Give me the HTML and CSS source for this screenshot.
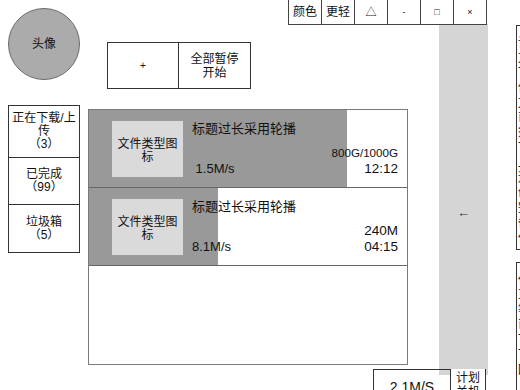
FILE: index.html
```html
<!DOCTYPE html>
<html lang="zh">
<head>
<meta charset="utf-8">
<title>下载管理</title>
<link rel="stylesheet" href="styles.css">
</head>
<body>
<div class="app">
  <div class="avatar">头像</div>
  <div class="actions">
    <div class="act plus">+</div>
    <div class="act">全部暂停<br>开始</div>
  </div>
  <div class="panel"><span class="arrow">←</span></div>
  <div class="toolbar">
    <div class="tb">颜色</div>
    <div class="tb">更轻</div>
    <div class="tb sym">△</div>
    <div class="tb tiny">-</div>
    <div class="tb tiny">□</div>
    <div class="tb tiny">×</div>
  </div>
  <nav class="nav">
    <div class="nav-item n1">正在下载/上传<br>（3）</div>
    <div class="nav-item n2">已完成<br>（99）</div>
    <div class="nav-item n3">垃圾箱<br>（5）</div>
  </nav>
  <section class="list">
    <div class="item" style="--p:81%">
      <div class="icon">文件类型图标</div>
      <div class="info">
        <div class="title">标题过长采用轮播</div>
        <div class="meta">
          <span class="speed">&nbsp;1.5M/s</span>
          <div class="stats"><div class="size">800G/1000G</div><div class="time">12:12</div></div>
        </div>
      </div>
    </div>
    <div class="item" style="--p:40.5%">
      <div class="icon">文件类型图标</div>
      <div class="info">
        <div class="title">标题过长采用轮播</div>
        <div class="meta">
          <span class="speed">8.1M/s</span>
          <div class="stats"><div class="size big">240M</div><div class="time">04:15</div></div>
        </div>
      </div>
    </div>
  </section>
  <div class="status">
    <div class="rate">2.1M/S</div>
    <div class="plan">计划<br>关机</div>
  </div>
  <aside class="side">
    <div class="sbox s1">详细信息<br>文件名称<br>下载地址<br>保存路径<br>文件大小<br>已经下载<br>剩余时间<br>下载速度<br>上传速度<br>连接数量<br>创建时间<br>完成时间<br>备注说明<br>任务状态</div>
    <div class="sbox s2">任务列表<br>正在下载<br>等待下载<br>已经暂停<br>下载完成<br>下载失败<br>回收站</div>
  </aside>
</div>
</body>
</html>
```

FILE: styles.css
```css
* { box-sizing: border-box; }
html, body { margin: 0; padding: 0; background: #fff; }
body {
  font-family: "Liberation Sans", "Noto Sans CJK SC", sans-serif;
  font-size: 12px;
  color: #111;
}
.app {
  display: grid;
  grid-template-columns: 88px 320px 31px 49px 28px 1fr;
  grid-template-rows: 105px 264px 21px;
  width: 520px;
  height: 390px;
  overflow: hidden;
}
.avatar {
  grid-area: 1 / 1;
  align-self: start;
  justify-self: start;
  margin: 8px 0 0 8px;
  width: 72px;
  height: 72px;
  border-radius: 50%;
  background: #ababab;
  border: 1px solid #6a6a6a;
  display: flex;
  align-items: center;
  justify-content: center;
  line-height: 14px;
}
.actions {
  grid-area: 1 / 2;
  align-self: start;
  justify-self: start;
  margin: 42px 0 0 19px;
  display: flex;
  border: 1px solid #333;
  height: 47px;
}
.act {
  width: 71px;
  display: flex;
  align-items: center;
  justify-content: center;
  text-align: center;
  line-height: 14px;
}
.act.plus { border-right: 1px solid #333; font-size: 10px; }
.panel {
  grid-column: 4;
  grid-row: 1 / 4;
  margin: 24px 0 15px 0;
  background: #d5d5d5;
  display: flex;
  align-items: center;
  justify-content: center;
  padding-top: 25px;
}
.arrow { font-size: 13px; color: #333; }
.toolbar {
  grid-column: 2 / 5;
  grid-row: 1;
  align-self: start;
  justify-self: end;
  margin-right: 1px;
  display: flex;
  border-left: 1px solid #444;
  border-bottom: 1px solid #444;
  background: #fff;
  position: relative;
  z-index: 1;
}
.tb {
  width: 33px;
  height: 24px;
  border-right: 1px solid #444;
  display: flex;
  align-items: center;
  justify-content: center;
  font-size: 12px;
  line-height: 14px;
}
.tb.sym { font-size: 11px; }
.tb.tiny { font-size: 9px; }
.nav {
  grid-area: 2 / 1;
  align-self: start;
  margin-left: 8px;
  width: 72px;
  border: 1px solid #333;
  border-bottom: none;
}
.nav-item {
  border-bottom: 1px solid #333;
  display: flex;
  align-items: center;
  justify-content: center;
  text-align: center;
  line-height: 13px;
  padding: 0 1px;
}
.n1 { height: 52px; }
.n2 { height: 47px; }
.n3 { height: 48px; }
.list {
  grid-area: 2 / 2;
  align-self: start;
  margin-top: 4px;
  height: 256px;
  border: 1px solid #7a7a7a;
}
.item {
  height: 78px;
  border-bottom: 1px solid #666;
  display: flex;
  align-items: flex-start;
  background: linear-gradient(to right, #999 var(--p), #fff var(--p));
}
.icon {
  margin: 11px 0 0 23px;
  width: 71px;
  height: 56px;
  flex: none;
  background: #dadada;
  display: flex;
  align-items: center;
  justify-content: center;
  text-align: center;
  line-height: 13px;
  padding-top: 4px;
}
.info {
  flex: 1;
  margin: 11px 9px 0 9px;
  height: 56px;
  display: flex;
  flex-direction: column;
  justify-content: space-between;
}
.title { font-size: 13px; line-height: 16px; }
.meta {
  display: flex;
  justify-content: space-between;
  align-items: flex-end;
}
.speed { font-size: 13px; line-height: 16px; }
.stats { text-align: right; }
.size { font-size: 11.6px; line-height: 16px; }
.size.big { font-size: 13.5px; }
.time { font-size: 13.5px; line-height: 16px; }
.status {
  grid-column: 2 / 5;
  grid-row: 3;
  align-self: start;
  justify-self: end;
  margin-right: 2px;
  display: flex;
  position: relative;
  z-index: 1;
}
.rate {
  width: 78px;
  height: 30px;
  border: 1px solid #333;
  text-align: center;
  font-size: 14px;
  line-height: 16px;
  padding-top: 9px;
}
.plan {
  width: 35px;
  height: 30px;
  border-right: 1px solid #333;
  background: #fff;
  text-align: center;
  font-size: 12px;
  line-height: 14px;
  padding-top: 2px;
}
.side {
  grid-column: 6;
  grid-row: 1 / 4;
  width: 120px;
  margin-top: 25px;
  align-self: start;
}
.sbox {
  border: 1px solid #333;
  font-size: 12px;
  line-height: 15px;
  padding: 10px 0 0 1px;
  overflow: hidden;
}
.s1 { height: 225px; }
.s2 { height: 200px; margin-top: 12px; }
```
